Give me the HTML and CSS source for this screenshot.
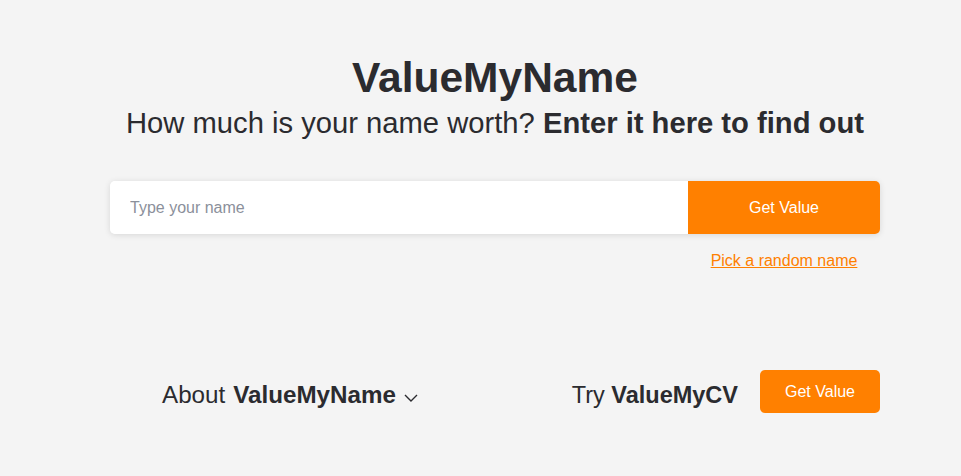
FILE: index.html
```html
<!DOCTYPE html>
<html lang="en">
<head>
<meta charset="utf-8">
<title>ValueMyName</title>
<link rel="stylesheet" href="styles.css">
</head>
<body>
<main class="page">
  <header class="hero">
    <h1 class="title">ValueMyName</h1>
    <p class="subtitle">How much is your name worth? <strong>Enter it here to find out</strong></p>
  </header>
  <form class="search">
    <input class="search-input" type="text" placeholder="Type your name">
    <button class="btn btn-main" type="button">Get Value</button>
  </form>
  <div class="random-row">
    <a class="random-link" href="#">Pick a random name</a>
  </div>
  <section class="bottom">
    <div class="about">About <strong>ValueMyName</strong>
      <svg class="chev" width="14" height="8" viewBox="0 0 14 8"><path d="M1 1 L7 7 L13 1" fill="none" stroke="#2b2b2f" stroke-width="1.4"/></svg>
    </div>
    <div class="try">
      <span class="try-text">Try <strong>ValueMyCV</strong></span>
      <button class="btn btn-small" type="button">Get Value</button>
    </div>
  </section>
</main>
</body>
</html>
```
FILE: styles.css
```css
html, body {
  margin: 0;
  padding: 0;
  background: #f4f4f4;
}
body {
  font-family: "Liberation Sans", Arial, sans-serif;
  color: #2b2b2f;
}
.page {
  width: 770px;
  margin-left: 110px;
  padding-top: 53px;
}
.hero {
  text-align: center;
}
.title {
  margin: 0;
  font-size: 42.5px;
  line-height: 49px;
  font-weight: 700;
}
.subtitle {
  margin: 5px 0 0;
  font-size: 29.2px;
  line-height: 33px;
  font-weight: 400;
}
.subtitle strong {
  font-weight: 700;
}
.search {
  display: flex;
  margin-top: 41px;
  height: 53px;
  border-radius: 5px;
  box-shadow: 0 1px 6px rgba(0,0,0,0.12);
}
.search-input {
  flex: 1;
  border: none;
  outline: none;
  background: #fff;
  border-radius: 5px 0 0 5px;
  padding: 0 20px;
  font-family: inherit;
  font-size: 16px;
  color: #2b2b2f;
}
.search-input::placeholder {
  color: #8b909b;
}
.btn {
  border: none;
  background: #ff8000;
  color: #fff;
  font-family: inherit;
  font-size: 16px;
  cursor: pointer;
}
.btn-main {
  width: 192px;
  border-radius: 0 5px 5px 0;
}
.random-row {
  display: flex;
  justify-content: flex-end;
  margin-top: 18px;
}
.random-link {
  width: 192px;
  text-align: center;
  font-size: 16px;
  line-height: 18px;
  color: #ff8000;
  text-decoration: underline;
}
.bottom {
  display: flex;
  justify-content: space-between;
  align-items: center;
  margin-top: 100px;
  padding-left: 52px;
}
.about {
  font-size: 24.2px;
  font-weight: 400;
  display: flex;
  align-items: center;
  gap: 8px;
  margin-top: 7px;
}
.chev {
  margin-top: 6px;
}
.try {
  display: flex;
  align-items: center;
  gap: 22px;
}
.try-text {
  font-size: 23.5px;
  margin-top: 7px;
}
.btn-small {
  width: 120px;
  height: 43px;
  border-radius: 5px;
}
```
